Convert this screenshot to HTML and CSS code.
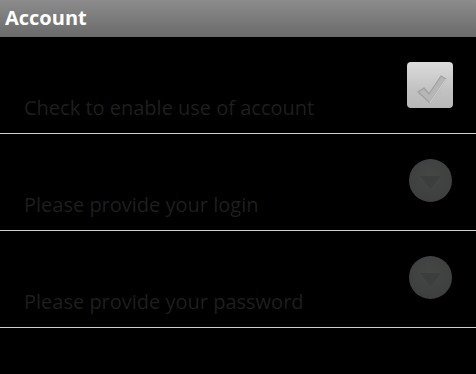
FILE: index.html
```html
<!DOCTYPE html>
<html>
<head>
<meta charset="utf-8">
<link rel="stylesheet" href="styles.css">
</head>
<body>
<div class="titlebar">Account</div>
<div class="list">
  <div class="row">
    <div class="text">Check to enable use of account</div>
    <div class="widget">
      <div class="checkbox">
        <svg width="46" height="46" viewBox="0 0 46 46">
          <path d="M11 30 L17 26 L22 32 L34 14 L39 17 L23 41 Z" fill="#b6b6b6" stroke="#a0a0a0" stroke-width="1.2" stroke-linejoin="round"/>
          <path d="M23 41 L39 17" stroke="#d6d6d6" stroke-width="1" fill="none"/>
        </svg>
      </div>
    </div>
  </div>
  <div class="row">
    <div class="text">Please provide your login</div>
    <div class="widget">
      <div class="circle up">
        <svg width="43" height="43" viewBox="0 0 43 43">
          <path d="M11 17 L32 17 L21.5 30 Z" fill="#3c3e3d"/>
        </svg>
      </div>
    </div>
  </div>
  <div class="row">
    <div class="text">Please provide your password</div>
    <div class="widget">
      <div class="circle">
        <svg width="43" height="43" viewBox="0 0 43 43">
          <path d="M11 17 L32 17 L21.5 30 Z" fill="#3c3e3d"/>
        </svg>
      </div>
    </div>
  </div>
</div>
</body>
</html>
```
FILE: styles.css
```css
html, body {
  margin: 0;
  padding: 0;
  background: #000;
}
body {
  width: 476px;
  height: 374px;
  overflow: hidden;
  font-family: "Open Sans", "DejaVu Sans", sans-serif;
}
.titlebar {
  height: 37px;
  box-sizing: border-box;
  padding-left: 5px;
  background: linear-gradient(#8c8c8c, #6a6a6a);
  color: #fff;
  font-weight: bold;
  font-size: 20px;
  line-height: 35px;
}
.row {
  height: 96px;
  border-bottom: 1px solid #cfcfcf;
  display: flex;
  align-items: center;
}
.text {
  flex: 1;
  align-self: flex-end;
  padding-left: 24px;
  padding-bottom: 12px;
  color: #1e1e1e;
  font-size: 20px;
  line-height: 26px;
}
.widget {
  width: 46px;
  display: flex;
  justify-content: center;
  padding-right: 23px;
}
.checkbox {
  width: 46px;
  height: 46px;
  border-radius: 4px;
  background: linear-gradient(#dcdcdc, #c2c2c2 60%, #b8b8b8);
}
.checkbox svg, .circle svg { display: block; }
.circle {
  width: 43px;
  height: 43px;
  border-radius: 50%;
  margin-top: -4px;
  background: radial-gradient(circle at 50% 40%, #454745, #3e403f 70%, #353736);
}
```
